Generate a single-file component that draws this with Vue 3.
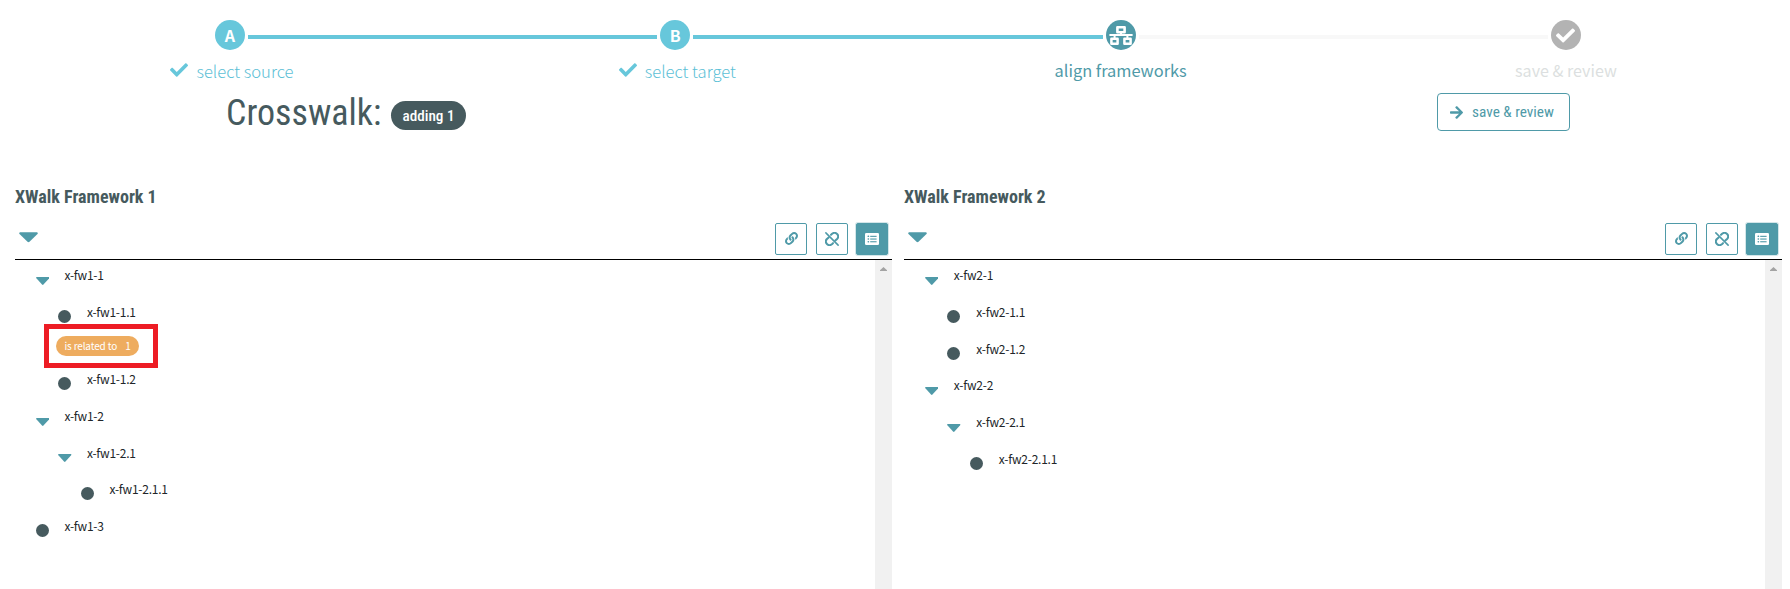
<script setup>
const steps = [
  { key: 'a', letter: 'A', label: 'select source', state: 'done' },
  { key: 'b', letter: 'B', label: 'select target', state: 'done' },
  { key: 'c', icon: 'network', label: 'align frameworks', state: 'current' },
  { key: 'd', icon: 'check', label: 'save & review', state: 'todo' },
]

const panels = [
  {
    title: 'XWalk Framework 1',
    rows: [
      { label: 'x-fw1-1', depth: 0, open: true },
      { label: 'x-fw1-1.1', depth: 1 },
      { relation: 'is related to', count: 1 },
      { label: 'x-fw1-1.2', depth: 1 },
      { label: 'x-fw1-2', depth: 0, open: true },
      { label: 'x-fw1-2.1', depth: 1, open: true },
      { label: 'x-fw1-2.1.1', depth: 2 },
      { label: 'x-fw1-3', depth: 0 },
    ],
  },
  {
    title: 'XWalk Framework 2',
    rows: [
      { label: 'x-fw2-1', depth: 0, open: true },
      { label: 'x-fw2-1.1', depth: 1 },
      { label: 'x-fw2-1.2', depth: 1 },
      { label: 'x-fw2-2', depth: 0, open: true },
      { label: 'x-fw2-2.1', depth: 1, open: true },
      { label: 'x-fw2-2.1.1', depth: 2 },
    ],
  },
]

const checkPath =
  'M173.898 439.404l-166.4-166.4c-9.997-9.997-9.997-26.206 0-36.204l36.203-36.204c9.997-9.998 26.207-9.998 36.204 0L192 312.69 432.095 72.596c9.997-9.997 26.207-9.997 36.204 0l36.203 36.204c9.997 9.997 9.997 26.206 0 36.204l-294.4 294.401c-9.998 9.997-26.207 9.997-36.204-.001z'
const arrowPath =
  'M190.5 66.9l22.2-22.2c9.4-9.4 24.6-9.4 33.9 0L441 239c9.4 9.4 9.4 24.6 0 33.9L246.6 467.3c-9.4 9.4-24.6 9.4-33.9 0l-22.2-22.2c-9.5-9.5-9.3-25 .4-34.3L311.4 296H24c-13.3 0-24-10.7-24-24v-32c0-13.3 10.7-24 24-24h287.4L190.9 101.2c-9.8-9.3-10-24.8-.4-34.3z'
const linkPath =
  'M326.612 185.391c59.747 59.809 58.927 155.698.36 214.59-.11.12-.24.25-.36.37l-67.2 67.2c-59.27 59.27-155.699 59.262-214.96 0-59.27-59.26-59.27-155.7 0-214.96l37.106-37.106c9.84-9.84 26.786-3.3 27.294 10.606.648 17.722 3.826 35.527 9.69 52.721 1.986 5.822.567 12.262-3.783 16.612l-13.087 13.087c-28.026 28.026-28.905 73.66-1.155 101.96 28.024 28.579 74.086 28.749 102.325.51l67.2-67.19c28.191-28.191 28.073-73.757 0-101.83-3.701-3.694-7.429-6.564-10.341-8.569a16.037 16.037 0 0 1-6.947-12.606c-.396-10.567 3.348-21.456 11.698-29.806l21.054-21.055c5.521-5.521 14.182-6.199 20.584-1.731a152.482 152.482 0 0 1 20.522 17.197zM467.547 44.449c-59.261-59.262-155.69-59.27-214.96 0l-67.2 67.2c-.12.12-.25.25-.36.37-58.566 58.892-59.387 154.781.36 214.59a152.454 152.454 0 0 0 20.521 17.196c6.402 4.468 15.064 3.789 20.584-1.731l21.054-21.055c8.35-8.35 12.094-19.239 11.698-29.806a16.037 16.037 0 0 0-6.947-12.606c-2.912-2.005-6.64-4.875-10.341-8.569-28.073-28.073-28.191-73.639 0-101.83l67.2-67.19c28.239-28.239 74.3-28.069 102.325.51 27.75 28.3 26.872 73.934-1.155 101.96l-13.087 13.087c-4.35 4.35-5.769 10.79-3.783 16.612 5.864 17.194 9.042 34.999 9.69 52.721.509 13.906 17.454 20.446 27.294 10.606l37.106-37.106c59.271-59.259 59.271-155.699.001-214.959z'
</script>

<template>
  <div class="page">
    <ol class="steps">
      <li v-for="s in steps" :key="s.key" class="step" :class="s.state">
        <div class="track">
          <span class="bar left"></span>
          <span class="dot">
            <template v-if="s.letter">{{ s.letter }}</template>
            <svg v-else-if="s.icon === 'network'" class="net" viewBox="0 0 24 19">
              <g fill="none" stroke="#fff" stroke-linejoin="round">
                <rect x="8.4" y="1.3" width="7.2" height="4.9" stroke-width="2.6" />
                <path d="M0.4 9h23.2M12 7v2M5.6 9v3M18.4 9v3" stroke-width="2" />
                <rect x="2.4" y="12.8" width="6.2" height="4.9" stroke-width="2.5" />
                <rect x="15.4" y="12.8" width="6.2" height="4.9" stroke-width="2.5" />
              </g>
            </svg>
            <svg v-else class="tick" viewBox="0 0 512 512"><path :d="checkPath" fill="#fff" /></svg>
          </span>
          <span class="bar right"></span>
        </div>
        <div class="caption">
          <svg v-if="s.state === 'done'" class="check" viewBox="0 0 512 512">
            <path :d="checkPath" fill="currentColor" />
          </svg>
          <span>{{ s.label }}</span>
        </div>
      </li>
    </ol>

    <header class="head">
      <h1 class="cond">Crosswalk:</h1>
      <span class="pill cond">adding 1</span>
      <button class="save">
        <svg viewBox="0 0 448 512"><path :d="arrowPath" fill="currentColor" /></svg>
        <span class="cond">save &amp; review</span>
      </button>
    </header>

    <main class="panels">
      <section v-for="p in panels" :key="p.title" class="panel">
        <h2 class="cond">{{ p.title }}</h2>
        <div class="toolbar">
          <svg class="caret big" viewBox="0 0 19 10">
            <path d="M1 0h17q1.4.6.5 1.7l-8 7.8q-1 .9-2 0l-8-7.8Q-.4.6 1 0z" fill="currentColor" />
          </svg>
          <div class="tools">
            <button class="tool">
              <svg width="13" height="13" viewBox="0 0 512 512"><path :d="linkPath" fill="currentColor" /></svg>
            </button>
            <button class="tool">
              <svg width="14" height="14" viewBox="0 0 13 13">
                <g fill="none" stroke="currentColor" stroke-width="1.9" stroke-linecap="round">
                  <path d="M.8.8l11.4 11.4" stroke-width="1.4" />
                  <path d="M5.6 2.6l1-.9c1.400-1.200 3.400-1 4.600.2 1.300 1.300 1.200 3.300 0 4.600L9.600 8" />
                  <path d="M7.400 10.400l-1 .9c-1.400 1.200-3.400 1-4.600-.2-1.300-1.300-1.200-3.300 0-4.600L3.400 5" />
                </g>
              </svg>
            </button>
            <button class="tool active">
              <svg width="14" height="12" viewBox="0 0 14 12">
                <rect width="14" height="12" rx="1.3" fill="#fff" />
                <g fill="#4f9aa8">
                  <rect x="2.5" y="2.6" width="1.7" height="1.5" rx=".7" />
                  <rect x="2.5" y="5.3" width="1.7" height="1.5" rx=".7" />
                  <rect x="2.5" y="8" width="1.7" height="1.5" rx=".7" />
                  <rect x="5.2" y="2.8" width="6.4" height="1.1" />
                  <rect x="5.2" y="5.5" width="6.4" height="1.1" />
                  <rect x="5.2" y="8.2" width="6.4" height="1.1" />
                </g>
              </svg>
            </button>
          </div>
        </div>
        <div class="body">
          <ul class="tree">
            <template v-for="(r, i) in p.rows" :key="i">
              <li v-if="r.relation" class="relation">
                <span class="tag"><span>{{ r.relation }}</span><span>{{ r.count }}</span></span>
                <span class="highlight"></span>
              </li>
              <li v-else class="row" :class="'depth' + r.depth">
                <svg v-if="r.open" class="caret small" viewBox="0 0 19 10" preserveAspectRatio="none">
                  <path d="M1 0h17q1.4.6.5 1.7l-8 7.8q-1 .9-2 0l-8-7.8Q-.4.6 1 0z" fill="currentColor" />
                </svg>
                <span v-else class="bullet"></span>
                <span class="name">{{ r.label }}</span>
              </li>
            </template>
          </ul>
          <div class="scroll">
            <svg width="7" height="4" viewBox="0 0 7 4"><path d="M3.5 0L7 3.2V4H0v-.8z" fill="#a3a3a3" /></svg>
          </div>
        </div>
      </section>
    </main>
  </div>
</template>

<style>
body {
  overflow: hidden;
  background: #fff;
}
</style>

<style scoped>
* {
  box-sizing: border-box;
  margin: 0;
  padding: 0;
}
svg {
  display: block;
  flex: none;
}
.page {
  width: 1790px;
  height: 589px;
  overflow: hidden;
  font-family: "Source Sans Pro", "Noto Sans CJK SC", "Noto Sans", sans-serif;
  color: #212529;
}
.cond {
  font-family: "Roboto Condensed", Roboto, sans-serif;
  font-stretch: 75%;
}
.steps {
  display: flex;
  list-style: none;
  padding: 20px 0 0 7.3px;
  width: 1788.6px;
  height: 88px;
}
.step {
  flex: 1;
  display: flex;
  flex-direction: column;
  align-items: center;
}
.track {
  display: flex;
  width: 100%;
  height: 30px;
  gap: 3px;
}
.bar {
  flex: 1;
  height: 4px;
  margin-top: 15px;
  background: #67c7db;
}
.step:first-child .left,
.step:last-child .right {
  visibility: hidden;
}
.current .right,
.todo .bar {
  background: #f8f8f8;
}
.dot {
  width: 30px;
  height: 30px;
  border-radius: 50%;
  background: #67c7db;
  color: #fff;
  font-weight: 700;
  font-size: 16px;
  line-height: 31px;
  display: flex;
  justify-content: center;
  align-items: center;
}
.current .dot {
  background: #4f9aa8;
}
.todo .dot {
  background: #b3b3b3;
}
.net {
  width: 24px;
  height: 19px;
}
.tick {
  width: 19px;
  height: 19px;
}
.caption {
  display: flex;
  align-items: center;
  gap: 8px;
  height: 24px;
  margin-top: 8px;
  font-size: 16.4px;
  line-height: 24px;
  white-space: nowrap;
  color: #4f9aa8;
}
.done .caption {
  color: #67c7db;
  font-weight: 300;
  font-size: 16.6px;
  margin-top: 9px;
  padding-left: 4px;
}
.done .caption span {
  color: #5cc0d6;
}
.todo .caption {
  color: #dcdfe0;
  font-size: 16.1px;
}
.check {
  width: 18px;
  height: 18px;
  margin-top: -2px;
}
.head {
  display: flex;
  align-items: flex-start;
  height: 96px;
  padding: 5px 220px 0 226px;
}
.head h1 {
  font-size: 36px;
  font-weight: 400;
  line-height: 40px;
  width: 156px;
  white-space: nowrap;
  color: #465a5e;
}
.pill {
  margin: 8px 0 0 9px;
  width: 75px;
  height: 29px;
  border-radius: 15px;
  background: #465a5e;
  color: #fff;
  font-size: 15.2px;
  font-weight: 500;
  line-height: 30px;
  text-align: center;
  white-space: nowrap;
}
.save {
  margin-left: auto;
  width: 133px;
  height: 38px;
  border: 1px solid #4f9aa8;
  border-radius: 4px;
  background: #fff;
  color: #4f9aa8;
  display: flex;
  align-items: center;
  padding-left: 12px;
  font-size: 15.3px;
  white-space: nowrap;
}
.save svg {
  width: 13px;
  height: 15px;
  margin-right: 9px;
}
.panels {
  display: grid;
  grid-template-columns: 877px 878px;
  gap: 12px;
  padding-left: 15px;
}
.panel h2 {
  font-size: 18px;
  line-height: 24px;
  height: 36px;
  padding-top: 1px;
  font-weight: 700;
  color: #465a5e;
  white-space: nowrap;
}
.toolbar {
  display: flex;
  justify-content: space-between;
  height: 40px;
  border-bottom: 1px solid #000;
  padding: 3px 4px 0 4px;
}
.caret {
  color: #4f9aa8;
}
.big {
  width: 19px;
  height: 10.5px;
  margin-top: 9px;
}
.tools {
  display: flex;
  gap: 8.5px;
}
.tool {
  width: 32px;
  height: 32px;
  border: 1px solid #4f9aa8;
  border-radius: 2px;
  background: #fff;
  color: #4f9aa8;
  display: flex;
  align-items: center;
  justify-content: center;
  padding-bottom: 1px;
}
.tool.active {
  background: #4f9aa8;
  box-shadow: 0 0 0 1px #d3e6e9;
}
.body {
  display: flex;
  justify-content: space-between;
  height: 329px;
}
.tree {
  list-style: none;
}
.row {
  display: flex;
  height: 36.67px;
  padding-left: 20.5px;
}
.depth1 {
  padding-left: 43px;
}
.depth2 {
  padding-left: 65.5px;
}
.panel:last-child .tree {
  padding-left: 0.4px;
}
.small {
  width: 13.5px;
  height: 8px;
  margin-top: 17px;
}
.bullet {
  width: 13px;
  height: 13px;
  margin: 13.3px 0.5px 0 0;
  border-radius: 50%;
  background: #465a5e;
}
.name {
  margin-left: 15.4px;
  margin-top: 5.4px;
  font-size: 12px;
  letter-spacing: -0.24px;
  line-height: 20px;
  white-space: nowrap;
}
.relation {
  position: relative;
  height: 30.6px;
  padding: 2.6px 0 0 41px;
}
.tag {
  display: flex;
  gap: 8px;
  width: 83px;
  height: 20px;
  border-radius: 10px;
  background: #eeac5f;
  color: #fff;
  font-size: 10px;
  letter-spacing: -0.14px;
  line-height: 20px;
  padding-left: 8.4px;
  white-space: nowrap;
}
.highlight {
  position: absolute;
  left: 29px;
  top: -9.4px;
  width: 114px;
  height: 44px;
  border: 5px solid #ed1c24;
}
.scroll {
  width: 17px;
  background: #f1f1f1;
  padding: 7px 0 0 5px;
}
</style>
